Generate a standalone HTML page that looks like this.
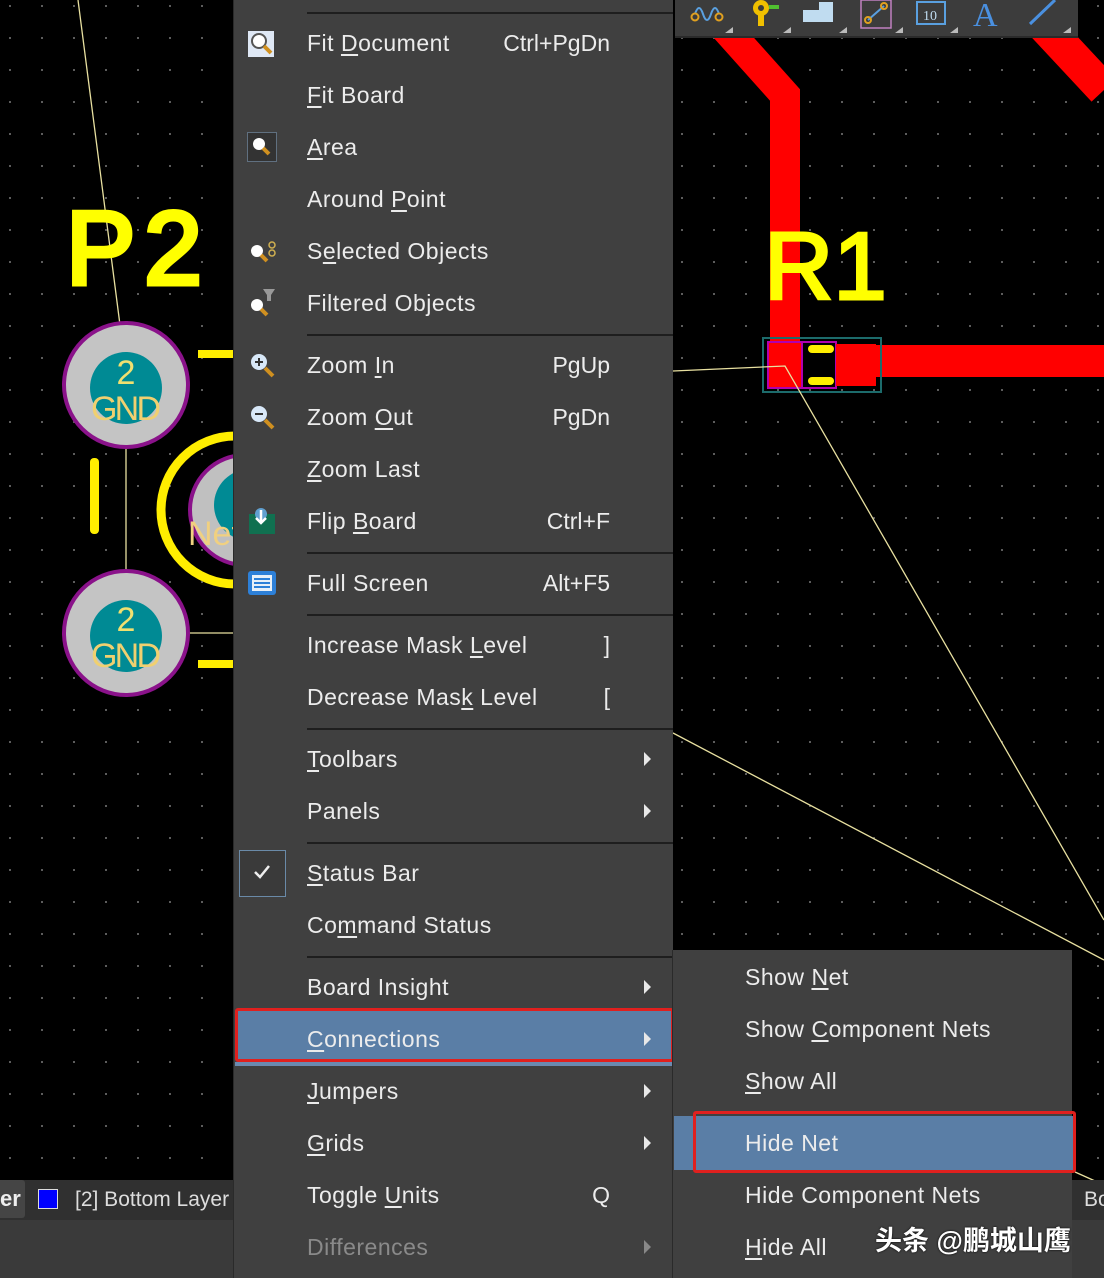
<!DOCTYPE html>
<html><head><meta charset="utf-8"><style>
*{margin:0;padding:0;box-sizing:border-box}
body{width:1104px;height:1278px;overflow:hidden;background:#000;position:relative;font-family:"Liberation Sans","Noto Sans CJK SC",sans-serif}
.grid{position:absolute;left:0;top:0;width:1104px;height:1278px;background-image:radial-gradient(circle,#6a6a6a 0.9px,transparent 1.2px);background-size:32px 32px;background-position:-6px -10px}
.menu{position:absolute;left:233px;top:0;width:440px;height:1278px;background:#404040;border-left:1px solid #2a2a2a}
.sub{position:absolute;left:672px;top:950px;width:400px;height:328px;background:#404040;border-left:1px solid #2a2a2a}
.it{position:absolute;color:#ececec;font-size:23px;height:30px;line-height:30px;white-space:nowrap;letter-spacing:0.5px}
.sc{position:absolute;color:#ececec;font-size:23px;height:30px;line-height:30px;text-align:right}
.sep{position:absolute;left:73px;right:0;height:2px;background:#1e1e1e}
.arr{position:absolute;left:410px;width:0;height:0;border-top:7px solid transparent;border-bottom:7px solid transparent;border-left:7px solid #e8e8e8}
u{text-decoration:underline;text-underline-offset:3px}
.ic{position:absolute;left:13px;width:30px;height:30px}
</style></head><body>
<div class="grid"></div>
<svg style="position:absolute;left:0;top:0" width="1104" height="1278">
 <path d="M700 0 L785 95 L785 350" stroke="#ff0000" stroke-width="30" fill="none"/>
 <path d="M1020 0 L1104 90" stroke="#ff0000" stroke-width="34" fill="none"/>
 <rect x="840" y="345" width="264" height="32" fill="#ff0000"/>
 <rect x="763" y="338" width="118" height="54" fill="none" stroke="#1c6b6b" stroke-width="2"/>
 <rect x="768" y="342" width="34" height="46" fill="#ff0000" stroke="#b000b0" stroke-width="2"/>
 <rect x="802" y="342" width="34" height="46" fill="#000" stroke="#b000b0" stroke-width="2"/>
 <rect x="836" y="344" width="40" height="42" fill="#ff0000"/>
 <rect x="808" y="345" width="26" height="8" rx="4" fill="#ffee00"/>
 <rect x="808" y="377" width="26" height="8" rx="4" fill="#ffee00"/>
 <text x="764" y="299" font-family="Liberation Sans" font-size="96" fill="#ffff00" stroke="#ffff00" stroke-width="3">R1</text>
 <path d="M78 0 L120 325 M126 445 L126 575 M673 371 L785 366 L1104 920 M673 733 L1104 960 M188 633 L233 633 M1075 1172 L1104 1185" stroke="#e8e0a0" stroke-width="1.3" fill="none"/>
 <text x="66" y="284" font-family="Liberation Sans" font-size="104" fill="#ffff00" stroke="#ffff00" stroke-width="5" textLength="136">P2</text>
 <rect x="198" y="350" width="35" height="8" fill="#ffee00"/>
 <rect x="198" y="660" width="35" height="8" fill="#ffee00"/>
 <rect x="90" y="458" width="9" height="76" rx="4" fill="#ffee00"/>
 <circle cx="235" cy="510" r="74" fill="none" stroke="#ffee00" stroke-width="9"/>
 <circle cx="245" cy="510" r="55" fill="#c0c0c0" stroke="#8a128a" stroke-width="4"/>
 <circle cx="250" cy="505" r="36" fill="#008a94"/>
 <text x="188" y="545" font-family="Liberation Sans" font-size="34" fill="#f0d080">Net</text>
 <circle cx="126" cy="385" r="62" fill="#c4c4c4" stroke="#8a128a" stroke-width="4"/>
 <circle cx="126" cy="388" r="36" fill="#008a94"/>
 <text x="126" y="384" text-anchor="middle" font-family="Liberation Sans" font-size="34" fill="#f0e070">2</text>
 <text x="126" y="420" text-anchor="middle" font-family="Liberation Sans" font-size="34" fill="#f0d070" textLength="70">GND</text>
 <circle cx="126" cy="633" r="62" fill="#c4c4c4" stroke="#8a128a" stroke-width="4"/>
 <circle cx="126" cy="636" r="36" fill="#008a94"/>
 <text x="126" y="631" text-anchor="middle" font-family="Liberation Sans" font-size="34" fill="#f0e070">2</text>
 <text x="126" y="667" text-anchor="middle" font-family="Liberation Sans" font-size="34" fill="#f0d070" textLength="70">GND</text>
</svg>
<div style="position:absolute;left:675px;top:0;width:403px;height:38px;background:#3c3c3c;border-bottom:2px solid #2a2a2a">
<svg width="403" height="38">
 <path d="M20 14 q4-12 8 0 t8 0 t8 0" stroke="#5aa0e0" stroke-width="2" fill="none"/><circle cx="20" cy="17" r="3.5" fill="none" stroke="#e0a020" stroke-width="2"/><circle cx="44" cy="17" r="3.5" fill="none" stroke="#e0a020" stroke-width="2"/>
 <circle cx="86" cy="8" r="8" fill="#f0c000"/><circle cx="86" cy="8" r="3" fill="#3c3c3c"/><rect x="83" y="14" width="6" height="12" fill="#f0c000"/><rect x="94" y="5" width="10" height="4" fill="#50c030"/>
 <path d="M128 22 h30 v-20 h-14 v8 h-16z" fill="#c0dcf0"/>
 <rect x="186" y="0" width="30" height="28" fill="none" stroke="#c080c0" stroke-width="1.5"/><path d="M193 20 L209 6" stroke="#5aa0e0" stroke-width="2"/><circle cx="193" cy="20" r="3" fill="none" stroke="#e0a020" stroke-width="2"/><circle cx="209" cy="6" r="3" fill="none" stroke="#e0a020" stroke-width="2"/>
 <rect x="242" y="2" width="28" height="22" fill="none" stroke="#5aa0e0" stroke-width="2"/><text x="248" y="20" font-size="14" fill="#c0dcf0" font-family="Liberation Serif">10</text>
 <text x="298" y="26" font-size="34" fill="#4a90e0" font-family="Liberation Serif">A</text>
 <path d="M355 24 L380 0" stroke="#4a90e0" stroke-width="3"/>
 <path d="M50 33 l8-6v6z M108 33 l8-6v6z M164 33 l8-6v6z M220 33 l8-6v6z M275 33 l8-6v6z M388 33 l8-6v6z" fill="#bbb"/>
</svg></div>
<div style="position:absolute;left:0;top:1180px;width:233px;height:40px;background:#303030"></div>
<div style="position:absolute;left:0;top:1180px;width:25px;height:38px;background:#454545;border-radius:0 3px 3px 0;color:#eee;font-size:22px;line-height:38px;font-weight:bold">er</div>
<div style="position:absolute;left:38px;top:1189px;width:20px;height:20px;background:#0000ff;border:1px solid #ddd"></div>
<div style="position:absolute;left:75px;top:1185px;color:#ddd;font-size:21px;line-height:30px;white-space:nowrap;width:158px;overflow:hidden">[2] Bottom Layer</div>
<div style="position:absolute;left:0;top:1220px;width:233px;height:58px;background:#3a3a3a"></div>
<div style="position:absolute;left:1072px;top:1180px;width:32px;height:40px;background:#303030;color:#ddd;font-size:21px;line-height:40px;padding-left:12px">Bo</div>
<div style="position:absolute;left:1072px;top:1220px;width:32px;height:58px;background:#3a3a3a"></div>

<div class="menu">
 <div class="sep" style="top:12px"></div>
 <svg class="ic" style="top:29px" viewBox="0 0 30 30"><rect x="1" y="2" width="26" height="26" fill="#dfe8f5"/><circle cx="12" cy="12" r="7" fill="#fff" stroke="#555" stroke-width="2"/><path d="M17 17 l7 7" stroke="#d09020" stroke-width="4"/></svg>
 <div class="it" style="left:73px;top:28px">Fit <u>D</u>ocument</div><div class="sc" style="right:63px;top:28px">Ctrl+PgDn</div>
 <div class="it" style="left:73px;top:80px"><u>F</u>it Board</div>
 <svg class="ic" style="top:132px" viewBox="0 0 30 30"><rect x="0.5" y="0.5" width="29" height="29" fill="#333" stroke="#607080"/><circle cx="12" cy="12" r="6" fill="#fff"/><path d="M16 16 l6 6" stroke="#d09020" stroke-width="4"/></svg>
 <div class="it" style="left:73px;top:132px"><u>A</u>rea</div>
 <div class="it" style="left:73px;top:184px">Around <u>P</u>oint</div>
 <svg class="ic" style="top:236px" viewBox="0 0 30 30"><circle cx="10" cy="15" r="6" fill="#fff"/><path d="M14 19 l6 6" stroke="#d09020" stroke-width="4"/><circle cx="25" cy="9" r="3" fill="none" stroke="#d0b050" stroke-width="1.5"/><circle cx="25" cy="17" r="3" fill="none" stroke="#d0b050" stroke-width="1.5"/></svg>
 <div class="it" style="left:73px;top:236px">S<u>e</u>lected Objects</div>
 <svg class="ic" style="top:288px" viewBox="0 0 30 30"><circle cx="10" cy="17" r="6" fill="#fff"/><path d="M14 21 l6 6" stroke="#d09020" stroke-width="4"/><path d="M16 1 h12 l-4 6 v6 h-4 v-6z" fill="#999"/></svg>
 <div class="it" style="left:73px;top:288px">Filtered Objects</div>
 <div class="sep" style="top:334px"></div>
 <svg class="ic" style="top:350px" viewBox="0 0 30 30"><circle cx="12" cy="12" r="8" fill="#d8e8f8"/><path d="M8 12h8M12 8v8" stroke="#333" stroke-width="2"/><path d="M18 18 l8 8" stroke="#d09020" stroke-width="4"/></svg>
 <div class="it" style="left:73px;top:350px">Zoom <u>I</u>n</div><div class="sc" style="right:63px;top:350px">PgUp</div>
 <svg class="ic" style="top:402px" viewBox="0 0 30 30"><circle cx="12" cy="12" r="8" fill="#d8e8f8"/><path d="M8 12h8" stroke="#333" stroke-width="2"/><path d="M18 18 l8 8" stroke="#d09020" stroke-width="4"/></svg>
 <div class="it" style="left:73px;top:402px">Zoom <u>O</u>ut</div><div class="sc" style="right:63px;top:402px">PgDn</div>
 <div class="it" style="left:73px;top:454px"><u>Z</u>oom Last</div>
 <svg class="ic" style="top:506px" viewBox="0 0 30 30"><rect x="2" y="8" width="26" height="20" fill="#107050"/><circle cx="14" cy="8" r="6" fill="#60a0d0"/><path d="M14 4v12M9 12l5 5 5-5" stroke="#fff" stroke-width="2.5" fill="none"/></svg>
 <div class="it" style="left:73px;top:506px">Flip <u>B</u>oard</div><div class="sc" style="right:63px;top:506px">Ctrl+F</div>
 <div class="sep" style="top:552px"></div>
 <svg class="ic" style="top:568px" viewBox="0 0 30 30"><rect x="1" y="3" width="28" height="24" rx="3" fill="#2d80d8"/><rect x="5" y="7" width="20" height="16" fill="#e8f0f8"/><path d="M7 11h16M7 15h16M7 19h16" stroke="#2d80d8" stroke-width="2"/></svg>
 <div class="it" style="left:73px;top:568px">Full Screen</div><div class="sc" style="right:63px;top:568px">Alt+F5</div>
 <div class="sep" style="top:614px"></div>
 <div class="it" style="left:73px;top:630px">Increase Mask <u>L</u>evel</div><div class="sc" style="right:63px;top:630px">]</div>
 <div class="it" style="left:73px;top:682px">Decrease Mas<u>k</u> Level</div><div class="sc" style="right:63px;top:682px">[</div>
 <div class="sep" style="top:728px"></div>
 <div class="it" style="left:73px;top:744px"><u>T</u>oolbars</div><div class="arr" style="top:752px"></div>
 <div class="it" style="left:73px;top:796px">Panels</div><div class="arr" style="top:804px"></div>
 <div class="sep" style="top:842px"></div>
 <div style="position:absolute;left:5px;top:850px;width:47px;height:47px;border:1px solid #6a8aa8;background:#3a3a3a"></div>
 <svg style="position:absolute;left:19px;top:864px" width="18" height="16"><path d="M2 8l5 5 9-11" stroke="#eee" stroke-width="2.5" fill="none"/></svg>
 <div class="it" style="left:73px;top:858px"><u>S</u>tatus Bar</div>
 <div class="it" style="left:73px;top:910px">Co<u>m</u>mand Status</div>
 <div class="sep" style="top:956px"></div>
 <div class="it" style="left:73px;top:972px">Board Insight</div><div class="arr" style="top:980px"></div>
 <div style="position:absolute;left:1px;top:1008px;width:439px;height:54px;background:#5a7ea6;border:3px solid #e0201e;border-radius:3px"></div>
 <div style="position:absolute;left:1px;top:1062px;width:439px;height:4px;background:#6a8ab0"></div>
 <div class="it" style="left:73px;top:1024px"><u>C</u>onnections</div><div class="arr" style="top:1032px"></div>
 <div class="it" style="left:73px;top:1076px"><u>J</u>umpers</div><div class="arr" style="top:1084px"></div>
 <div class="it" style="left:73px;top:1128px"><u>G</u>rids</div><div class="arr" style="top:1136px"></div>
 <div class="it" style="left:73px;top:1180px">Toggle <u>U</u>nits</div><div class="sc" style="right:63px;top:1180px">Q</div>
 <div class="it" style="left:73px;top:1232px;color:#8a8a8a">Differences</div><div class="arr" style="top:1240px;border-left-color:#888"></div>
</div>

<div class="sub">
 <div class="it" style="left:72px;top:12px">Show <u>N</u>et</div>
 <div class="it" style="left:72px;top:64px">Show <u>C</u>omponent Nets</div>
 <div class="it" style="left:72px;top:116px"><u>S</u>how All</div>
 <div style="position:absolute;left:1px;top:166px;width:400px;height:54px;background:#5a7ea6"></div>
 <div style="position:absolute;left:20px;top:161px;width:383px;height:62px;border:3px solid #e0201e;border-radius:3px"></div>
 <div class="it" style="left:72px;top:178px">Hide Net</div>
 <div class="it" style="left:72px;top:230px">Hide Component Nets</div>
 <div class="it" style="left:72px;top:282px"><u>H</u>ide All</div>
</div>
<div style="position:absolute;left:875px;top:1219px;color:#fff;font-size:27px;font-weight:bold;white-space:nowrap;font-family:'Liberation Sans','Noto Sans CJK SC',sans-serif;text-shadow:0 0 2px #000">头条 @鹏城山鹰</div>
</body></html>
